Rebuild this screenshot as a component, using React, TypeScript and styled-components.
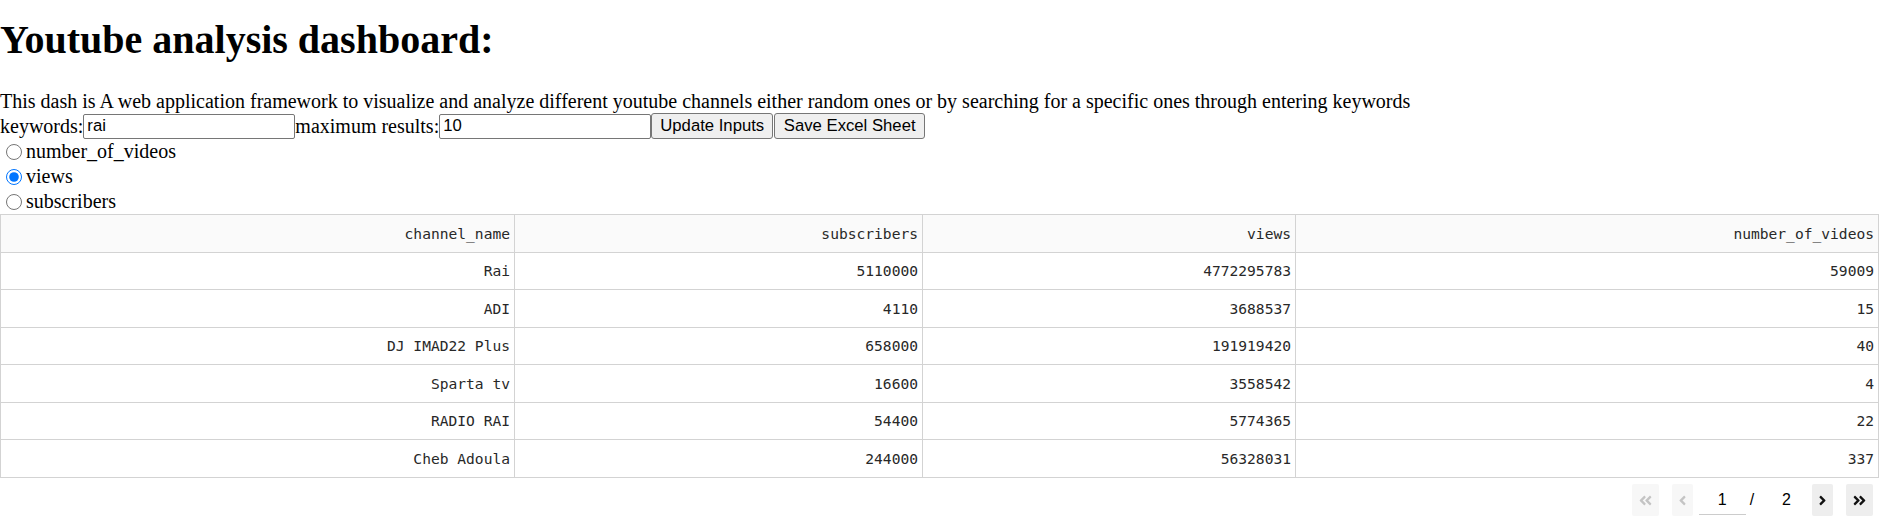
import React from "react";
import styled, { createGlobalStyle } from "styled-components";
import { FaAngleDoubleLeft, FaAngleLeft, FaAngleRight, FaAngleDoubleRight } from "react-icons/fa";

const GlobalStyle = createGlobalStyle`
  html, body { margin: 0; padding: 0; background: #fff; }
  body {
    font-family: "Liberation Serif", "Times New Roman", serif;
    font-size: 20px;
    color: #000;
  }
`;

const Page = styled.div`
  display: flex;
  flex-direction: column;
  align-items: flex-start;
`;

const Heading = styled.h1`
  font-size: 40px;
  font-weight: bold;
  line-height: 46px;
  margin: 17px 0 27px;
`;

const Intro = styled.div`
  line-height: 23px;
  height: 23px;
`;

const Controls = styled.div`
  display: flex;
  align-items: center;
  height: 26px;
  line-height: 23px;
`;

const Label = styled.span`
  white-space: nowrap;
`;

const TextInput = styled.input`
  box-sizing: border-box;
  width: 212px;
  height: 25px;
  margin: 0;
  padding: 1px 3px;
  border: 1px solid #767676;
  border-radius: 2px;
  font: 16.7px "Liberation Sans", Arial, sans-serif;
  color: #000;
  background: #fff;
  outline: none;
`;

const ActionButton = styled.button<{ $w: number }>`
  box-sizing: border-box;
  width: ${(p) => p.$w}px;
  height: 26px;
  margin: 0 1px 0 0;
  padding: 1px 6px;
  border: 1px solid #767676;
  border-radius: 3px;
  background: #efefef;
  font: 16.7px "Liberation Sans", Arial, sans-serif;
  color: #000;
  white-space: nowrap;
`;

const RadioGroup = styled.div`
  display: flex;
  flex-direction: column;
`;

const RadioRow = styled.label`
  display: flex;
  align-items: center;
  height: 25px;
  line-height: 23px;
`;

const Radio = styled.input`
  width: 16px;
  height: 16px;
  margin: 0 4px 0 6px;
`;

const Table = styled.table`
  border-collapse: collapse;
  table-layout: fixed;
  width: 1878px;
  font-family: "DejaVu Sans Mono", "Liberation Mono", monospace;
  font-size: 14.6px;
  color: rgb(40, 40, 40);
`;

const Row = styled.tr`
  height: 37.5px;
`;

const HeadCell = styled.th`
  border: 1px solid rgb(211, 211, 211);
  background: rgb(250, 250, 250);
  font-weight: normal;
  text-align: right;
  padding: 0 4px;
  white-space: nowrap;
`;

const Cell = styled.td`
  border: 1px solid rgb(211, 211, 211);
  text-align: right;
  padding: 0 4px;
  white-space: nowrap;
`;

const Pager = styled.div`
  box-sizing: border-box;
  width: 1878px;
  display: flex;
  justify-content: flex-end;
  align-items: center;
  padding: 6.5px 5px 0 0;
  font-family: "Liberation Sans", Arial, sans-serif;
  font-size: 16px;
  color: #000;
`;

const PageButton = styled.button<{ $w: number; $gap: number; $off?: boolean }>`
  box-sizing: border-box;
  width: ${(p) => p.$w}px;
  height: 32px;
  margin: 0 0 0 ${(p) => p.$gap}px;
  padding: 0;
  border: none;
  border-radius: 2px;
  display: flex;
  align-items: center;
  justify-content: center;
  background: ${(p) => (p.$off ? "#f7f7f7" : "#eeeeee")};
  color: ${(p) => (p.$off ? "#c4c4c4" : "#111")};
`;

const PageInput = styled.input`
  box-sizing: border-box;
  width: 47px;
  height: 29px;
  margin: 0 0 0 6px;
  padding: 0;
  border: none;
  border-bottom: 1px solid #cccccc;
  text-align: center;
  font: 16px "Liberation Sans", Arial, sans-serif;
  color: #000;
  background: transparent;
  outline: none;
`;

const Slash = styled.span`
  margin-left: 4px;
`;

const PageTotal = styled.span`
  margin-left: 28px;
`;

const columns = ["channel_name", "subscribers", "views", "number_of_videos"];
const widths = [514, 408, 373, 583];

const rows: (string | number)[][] = [
  ["Rai", 5110000, 4772295783, 59009],
  ["ADI", 4110, 3688537, 15],
  ["DJ IMAD22 Plus", 658000, 191919420, 40],
  ["Sparta tv", 16600, 3558542, 4],
  ["RADIO RAI", 54400, 5774365, 22],
  ["Cheb Adoula", 244000, 56328031, 337],
];

export default function App() {
  return (
    <Page>
      <GlobalStyle />
      <Heading>Youtube analysis dashboard:</Heading>
      <Intro>
        This dash is A web application framework to visualize and analyze different youtube channels either random ones or by searching for a specific ones through entering keywords
      </Intro>
      <Controls>
        <Label>keywords:</Label>
        <TextInput defaultValue="rai" />
        <Label>maximum results:</Label>
        <TextInput defaultValue="10" />
        <ActionButton $w={122}>Update Inputs</ActionButton>
        <ActionButton $w={151}>Save Excel Sheet</ActionButton>
      </Controls>
      <RadioGroup>
        {["number_of_videos", "views", "subscribers"].map((o) => (
          <RadioRow key={o}>
            <Radio type="radio" name="metric" defaultChecked={o === "views"} />
            {o}
          </RadioRow>
        ))}
      </RadioGroup>
      <Table>
        <colgroup>
          {widths.map((w, i) => (
            <col key={i} style={{ width: w }} />
          ))}
        </colgroup>
        <thead>
          <Row>
            {columns.map((c) => (
              <HeadCell key={c}>{c}</HeadCell>
            ))}
          </Row>
        </thead>
        <tbody>
          {rows.map((r, i) => (
            <Row key={i}>
              {r.map((v, j) => (
                <Cell key={j}>{v}</Cell>
              ))}
            </Row>
          ))}
        </tbody>
      </Table>
      <Pager>
        <PageButton $w={27} $gap={0} $off>
          <FaAngleDoubleLeft size={15} />
        </PageButton>
        <PageButton $w={21} $gap={13} $off>
          <FaAngleLeft size={15} />
        </PageButton>
        <PageInput defaultValue="1" />
        <Slash>/</Slash>
        <PageTotal>2</PageTotal>
        <PageButton $w={21} $gap={21}>
          <FaAngleRight size={15} />
        </PageButton>
        <PageButton $w={27} $gap={13}>
          <FaAngleDoubleRight size={15} />
        </PageButton>
      </Pager>
    </Page>
  );
}
